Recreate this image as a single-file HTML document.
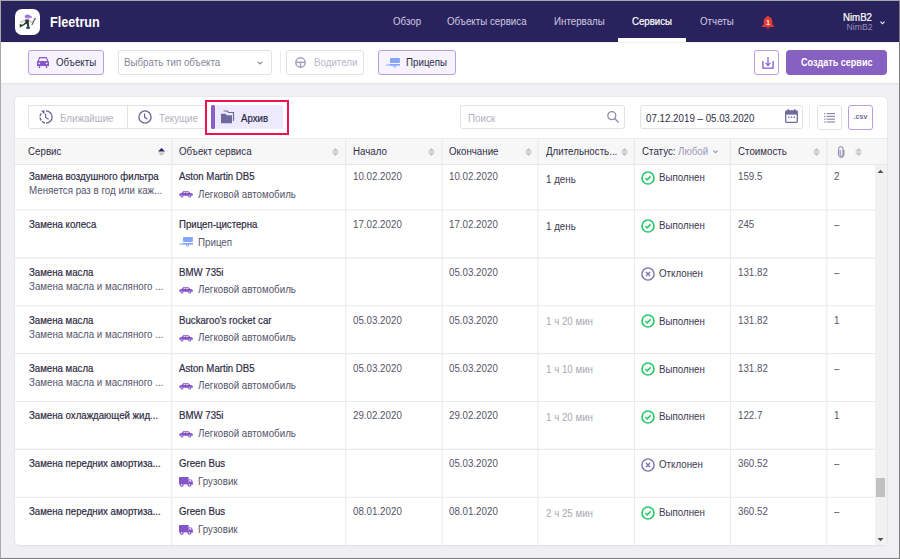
<!DOCTYPE html>
<html><head><meta charset="utf-8">
<style>
*{box-sizing:border-box;margin:0;padding:0}
html,body{width:900px;height:559px;overflow:hidden}
body{position:relative;background:#efeff4;font-family:"Liberation Sans",sans-serif;color:#2f2d45}
.a{position:absolute}
.t{position:absolute;white-space:nowrap;font-size:10px;line-height:12px;transform:scaleX(.975);transform-origin:0 0}
.tb{position:absolute;white-space:nowrap;font-size:10px;line-height:12px;-webkit-text-stroke:.2px currentColor;transform:scaleX(.965);transform-origin:0 0}
svg{position:absolute;overflow:visible}
#frame{left:0;top:0;width:900px;height:559px;border-left:1px solid #a8a8a8;border-top:1px solid #a8a8a8;border-right:1px solid #7c7c7c;border-bottom:1px solid #7c7c7c;z-index:50}
#hdr{left:0;top:0;width:900px;height:42px;background:#2a225c}
.nav{color:#cfcbe4}
#tool{left:0;top:42px;width:900px;height:41px;background:#fff;box-shadow:0 1px 2px rgba(0,0,0,.06),inset 0 1px 1px rgba(0,0,0,.06)}
.btn{position:absolute;border:1px solid #e2e1e6;border-radius:3px;background:#fff}
.btnp{border-color:#b99de3;background:#f6f3fe}
#panel{left:15px;top:97px;width:872px;height:448px;background:#fff;border-radius:4px;box-shadow:0 0 1.5px rgba(0,0,0,.13),0 1px 3px rgba(0,0,0,.05)}
.vl{position:absolute;width:1px;background:#e6e6e9}
.hl{position:absolute;height:1px;background:#e8e8eb}
.c1{color:#2f2d45}
.c2{color:#4d4b60}
.gr{color:#b3b1bd}
</style></head><body>
<div id="frame" class="a"></div>

<!-- HEADER -->
<div id="hdr" class="a"></div>
<div class="a" style="left:15px;top:9px;width:25px;height:26px;background:#fff;border-radius:7px"></div>
<svg style="left:15px;top:9px" width="25" height="26" viewBox="0 0 25 26">
  <ellipse cx="12.6" cy="7.6" rx="2.8" ry="2" fill="#9d74e8"/>
  <rect x="13.5" y="7.3" width="3.6" height="1.4" rx="0.6" fill="#9d74e8"/>
  <rect x="11" y="8.8" width="3.2" height="2" fill="#f3c6c0"/>
  <path d="M7.6 10.6 L10.4 10.4 L10.4 12.8 L7.6 13.2 Z" fill="#d8d8d8"/>
  <path d="M13.6 10.6 L16 11.2 L15.8 13 L13.6 12.6 Z" fill="#d0d0d0"/>
  <path d="M10.2 10.6 L13.8 10.6 L13.8 14.4 L10.2 14.4 Z" fill="#1f3a33"/>
  <path d="M10.2 13.6 L12.4 14 L8.6 16.6 L6.8 17.6 L5.4 16.2 L7.8 15.4 Z" fill="#1f3a33"/>
  <rect x="4.7" y="15.2" width="1.8" height="3" fill="#1f3a33"/>
  <path d="M11.6 14 L13.8 14 L14.2 17.8 L12.4 17.8 Z" fill="#1f3a33"/>
  <rect x="11.4" y="17.6" width="3.4" height="2.2" fill="#1f3a33"/>
  <rect x="5.3" y="12" width="2.3" height="2.2" fill="#f0c2bd"/>
  <rect x="15.4" y="12" width="2.6" height="2" fill="#f0c2bd"/>
  <path d="M20.4 10.2 L17.6 15.8 L16.9 16.6 L16.3 16.2 L19.3 9.8 Z" fill="#555"/>
  <path d="M18.6 9.6 L19.3 8.6 L19.9 10 L20.6 8.7 L21.2 9.8 L20.4 11 L19 11 Z" fill="#777"/>
</svg>
<div class="a" style="left:50px;top:14px;font-size:14px;line-height:16px;font-weight:bold;color:#fff;white-space:nowrap;transform:scaleX(.9);transform-origin:0 0;">Fleetrun</div>

<div class="t nav" style="left:393px;top:16px">Обзор</div>
<div class="t nav" style="left:447px;top:16px">Объекты сервиса</div>
<div class="t nav" style="left:554px;top:16px">Интервалы</div>
<div class="tb" style="left:632px;top:16px;color:#fff">Сервисы</div>
<div class="a" style="left:618px;top:38px;width:68px;height:4px;background:#fff"></div>
<div class="t nav" style="left:700px;top:16px">Отчеты</div>
<svg style="left:761px;top:15px" width="14" height="14" viewBox="0 0 14 14">
  <path d="M7 0.8 C7.6 0.8 8 1.2 8 1.8 C10.2 2.4 11.3 4.3 11.3 6.6 L11.3 9.6 L13.2 11.3 L13.2 12 L0.8 12 L0.8 11.3 L2.7 9.6 L2.7 6.6 C2.7 4.3 3.8 2.4 6 1.8 C6 1.2 6.4 0.8 7 0.8 Z" fill="#e33a36"/>
  <path d="M5.6 12.4 L8.4 12.4 C8.4 13.2 7.8 13.8 7 13.8 C6.2 13.8 5.6 13.2 5.6 12.4Z" fill="#e33a36"/>
  <text x="7" y="10.2" font-size="6.5" font-weight="bold" fill="#fff" text-anchor="middle" font-family="Liberation Sans">1</text>
</svg>
<div class="tb" style="left:843px;top:12px;color:#fff">NimB2</div>
<div class="a" style="left:846.5px;top:22px;font-size:8.7px;line-height:11px;color:#9591b5;white-space:nowrap">NimB2</div>
<svg style="left:880px;top:20.5px" width="5" height="4" viewBox="0 0 5 4"><path d="M0.5 0.7 L2.5 2.8 L4.5 0.7" stroke="#fff" stroke-width="1.1" fill="none"/></svg>

<!-- TOOLBAR -->
<div id="tool" class="a"></div>
<div class="btn btnp" style="left:28px;top:50px;width:76px;height:25px"></div>
<svg style="left:36.8px;top:56.8px" width="12" height="11" viewBox="0 0 12 11">
  <path d="M2.2 0 L9.8 0 L11.2 4 L12 4.6 L12 9 L10.2 9 L10.2 11 L8.8 11 L8.8 9 L3.2 9 L3.2 11 L1.8 11 L1.8 9 L0 9 L0 4.6 L0.8 4 Z" fill="#8456c8"/>
  <path d="M2.9 1.2 L9.1 1.2 L10 3.9 L2 3.9 Z" fill="#f6f3fe"/>
  <circle cx="2.3" cy="6.3" r="0.9" fill="#f6f3fe"/><circle cx="9.7" cy="6.3" r="0.9" fill="#f6f3fe"/>
</svg>
<div class="t c1" style="left:56px;top:57px">Объекты</div>

<div class="btn" style="left:118px;top:50px;width:154px;height:25px"></div>
<div class="t" style="left:124px;top:57px;color:#87859a">Выбрать тип объекта</div>
<svg style="left:257px;top:61px" width="6" height="4" viewBox="0 0 6 4"><path d="M0.6 0.6 L3 3 L5.4 0.6" stroke="#8a889c" stroke-width="1.1" fill="none"/></svg>
<div class="vl" style="left:280px;top:52px;height:21px;background:#ebebee"></div>

<div class="btn" style="left:286px;top:50px;width:78px;height:25px"></div>
<svg style="left:295px;top:57px" width="11" height="11" viewBox="0 0 11 11">
  <circle cx="5.5" cy="5.5" r="4.7" stroke="#a19dbd" stroke-width="1.4" fill="none"/>
  <path d="M1 5.3 L10 5.3" stroke="#a19dbd" stroke-width="1.4"/>
  <path d="M5.5 5.3 L5.5 10" stroke="#a19dbd" stroke-width="1.4"/>
</svg>
<div class="t" style="left:314px;top:57px;color:#b9b6c8">Водители</div>

<div class="btn btnp" style="left:378px;top:50px;width:78px;height:25px"></div>
<svg style="left:385.8px;top:57.9px" width="14" height="11" viewBox="0 0 14 11">
<rect x="4" y="0" width="9.9" height="5" rx="0.7" fill="#86a5f8"/>
<rect x="3.4" y="6" width="10.5" height="1.7" fill="#86a5f8"/>
<rect x="0" y="6.6" width="3.6" height="0.9" fill="#86a5f8"/>
<circle cx="8.6" cy="7.9" r="1.6" fill="#86a5f8"/><circle cx="8.6" cy="7.9" r="0.6" fill="#f6f3fe"/>
</svg>
<div class="t c1" style="left:406px;top:57px">Прицепы</div>

<div class="btn" style="left:754px;top:50px;width:25px;height:25px;border-color:#b99de3"></div>
<svg style="left:761.5px;top:57px" width="12" height="12" viewBox="0 0 12 12">
  <path d="M0.9 4 L0.9 11.1 L11.1 11.1 L11.1 4" stroke="#8456c8" stroke-width="1.3" fill="none"/>
  <path d="M6 0 L6 8.3" stroke="#8456c8" stroke-width="1.2"/>
  <path d="M3.6 5.9 L6 8.4 L8.4 5.9" stroke="#8456c8" stroke-width="1.2" fill="none"/>
</svg>
<div class="a" style="left:786px;top:50px;width:101px;height:25px;background:#8661c1;border-radius:4px"></div>
<div class="t" style="left:801px;top:57px;color:#fff;font-weight:bold;transform:scaleX(.905)">Создать сервис</div>

<!-- PANEL -->
<div id="panel" class="a"></div>

<!-- segmented -->
<div class="btn" style="left:28px;top:105px;width:178px;height:24px;border-radius:3px 0 0 3px;border-right:none"></div>
<div class="vl" style="left:127px;top:105px;height:24px;background:#e2e1e6"></div>
<svg style="left:39px;top:110px" width="14" height="14" viewBox="0 0 14 14">
  <path d="M7 0.9 A6.1 6.1 0 0 1 7 13.1" stroke="#6a6393" stroke-width="1.3" fill="none"/>
  <path d="M6 13 A6.1 6.1 0 0 1 3.2 11.6" stroke="#6a6393" stroke-width="1.3" fill="none"/>
  <path d="M2.3 10.5 A6.1 6.1 0 0 1 1 7.6" stroke="#6a6393" stroke-width="1.3" fill="none"/>
  <path d="M1 6.3 A6.1 6.1 0 0 1 2.3 3.4" stroke="#6a6393" stroke-width="1.3" fill="none"/>
  <path d="M2 0.6 L5.6 0.6 L5.4 4.4 Z" fill="#6a6393"/>
  <path d="M6.6 3.8 L6.6 7.4 L9.6 9.3" stroke="#6a6393" stroke-width="1.2" fill="none"/>
</svg>
<div class="t" style="left:60px;top:113px;color:#b3b1bd">Ближайшие</div>
<svg style="left:138px;top:110px" width="14" height="14" viewBox="0 0 14 14">
  <circle cx="7" cy="7" r="6.1" stroke="#6a6393" stroke-width="1.3" fill="none"/>
  <path d="M6.6 3.6 L6.6 7.3 L9.4 9" stroke="#6a6393" stroke-width="1.2" fill="none"/>
</svg>
<div class="t" style="left:159px;top:113px;color:#b3b1bd">Текущие</div>

<div class="a" style="left:211px;top:105px;width:72px;height:24px;background:#eeeafd;border-radius:0 3px 3px 0"></div>
<div class="a" style="left:211px;top:105px;width:3.5px;height:24px;background:#8a5fc8;border-radius:1.5px"></div>
<svg style="left:221px;top:111px" width="14" height="12.5" viewBox="0 0 14 12.5">
  <path d="M2.5 0 L6.2 0 L7.5 1.5 L12.5 1.5 L12.5 10" stroke="#6f6a9e" stroke-width="1.2" fill="none"/>
  <path d="M0 2.8 L4.5 2.8 L5.8 4.2 L11 4.2 L11 12.3 L0 12.3 Z" fill="#6f6a9e"/>
</svg>
<div class="tb" style="left:241px;top:113px;color:#2a2745">Архив</div>
<div class="a" style="left:205px;top:100px;width:84px;height:35px;border:2px solid #ee1250;z-index:20"></div>

<!-- search -->
<div class="btn" style="left:460px;top:105px;width:165px;height:24px"></div>
<div class="t" style="left:468px;top:113px;color:#b3b1bd">Поиск</div>
<svg style="left:606px;top:110px" width="14" height="14" viewBox="0 0 14 14">
  <circle cx="5.8" cy="5.6" r="4" stroke="#8f8ab0" stroke-width="1.3" fill="none"/>
  <path d="M8.7 8.6 L12.6 12.4" stroke="#8f8ab0" stroke-width="1.4"/>
</svg>

<!-- date -->
<div class="btn" style="left:640px;top:105px;width:163px;height:24px"></div>
<div class="t c1" style="left:646px;top:113px">07.12.2019 – 05.03.2020</div>
<svg style="left:784.5px;top:108.5px" width="13" height="14" viewBox="0 0 13 14">
  <rect x="0.7" y="2" width="11.6" height="11.3" rx="1" stroke="#6f6a9e" stroke-width="1.3" fill="none"/>
  <rect x="0.7" y="2" width="11.6" height="3.6" fill="#6f6a9e"/>
  <rect x="2.6" y="0" width="1.3" height="3" fill="#6f6a9e"/><rect x="9.1" y="0" width="1.3" height="3" fill="#6f6a9e"/>
  <rect x="3" y="7.5" width="1.4" height="1.4" fill="#6f6a9e"/><rect x="5.8" y="7.5" width="1.4" height="1.4" fill="#6f6a9e"/><rect x="8.6" y="7.5" width="1.4" height="1.4" fill="#6f6a9e"/>
</svg>
<div class="vl" style="left:809px;top:105px;height:24px;background:#ececef"></div>
<div class="btn" style="left:817px;top:105px;width:25px;height:25px"></div>
<svg style="left:823.5px;top:112.5px" width="11" height="10" viewBox="0 0 11 10">
  <rect x="0" y="0" width="1.3" height="1.2" fill="#8f8ab0"/><rect x="2.5" y="0" width="8.5" height="1.2" fill="#8f8ab0"/>
  <rect x="0" y="2.8" width="1.3" height="1.2" fill="#8f8ab0"/><rect x="2.5" y="2.8" width="8.5" height="1.2" fill="#8f8ab0"/>
  <rect x="0" y="5.6" width="1.3" height="1.2" fill="#8f8ab0"/><rect x="2.5" y="5.6" width="8.5" height="1.2" fill="#8f8ab0"/>
  <rect x="0" y="8.4" width="1.3" height="1.2" fill="#8f8ab0"/><rect x="2.5" y="8.4" width="8.5" height="1.2" fill="#8f8ab0"/>
</svg>
<div class="btn" style="left:848px;top:105px;width:25px;height:25px;border-color:#b99de3"></div>
<div class="a" style="left:853.5px;top:112.5px;font-size:7px;line-height:8px;font-weight:bold;color:#6f6a9e;white-space:nowrap;letter-spacing:.1px">.csv</div>

<!-- TABLE -->
<div class="hl" style="left:15px;top:138px;width:872px;background:#ebebee"></div>
<div class="a" style="left:15px;top:139px;width:872px;height:25px;background:#f7f7f8"></div>
<div class="hl" style="left:15px;top:164px;width:872px;background:#e6e6e9"></div>
<div class="a" style="left:15px;top:165px;width:860px;height:380px;overflow:hidden">
<div class="tb" style="left:14px;top:6px;color:#2f2d45">Замена воздушного фильтра</div>
<div class="t" style="left:14px;top:20px;color:#535469">Меняется раз в год или каж...</div>
<div class="tb" style="left:164px;top:6px;color:#2f2d45">Aston Martin DB5</div>
<svg style="left:163.8px;top:26.1px" width="14" height="7" viewBox="0 0 14 7">
<path d="M4.5 0 L9.2 0 L11.4 2.1 L13.2 2.5 L14 3.5 L13.6 4.7 L0.6 4.7 L0.1 3.5 L0.8 2.6 L2.6 2.1 Z" fill="#8456c8"/>
<path d="M4.9 0.8 L6.4 0.8 L6.4 1.8 L4.3 1.8 Z M7.1 0.8 L8.9 0.8 L9.8 1.8 L7.1 1.8 Z" fill="#fff"/>
<circle cx="3" cy="4.9" r="1.55" fill="#8456c8"/><circle cx="10.7" cy="4.9" r="1.55" fill="#8456c8"/>
<circle cx="3" cy="4.9" r="0.65" fill="#fff"/><circle cx="10.7" cy="4.9" r="0.65" fill="#fff"/>
</svg>
<div class="t" style="left:183px;top:24px;color:#535469">Легковой автомобиль</div>
<div class="t" style="left:338px;top:6px;color:#535469">10.02.2020</div>
<div class="t" style="left:434px;top:6px;color:#535469">10.02.2020</div>
<div class="t" style="left:531px;top:9px;color:#3a384f">1 день</div>
<svg style="left:626.3px;top:5.8px" width="14" height="14" viewBox="0 0 14 14">
<circle cx="7" cy="7" r="6" stroke="#2cc86b" stroke-width="1.7" fill="none"/>
<path d="M4.3 7.2 L6.2 8.9 L9.7 5.4" stroke="#2cc86b" stroke-width="1.5" fill="none"/>
</svg>
<div class="t" style="left:644px;top:7px;color:#3a384f">Выполнен</div>
<div class="t" style="left:723px;top:6px;color:#535469">159.5</div>
<div class="t" style="left:819px;top:6px;color:#535469">2</div>
<div class="tb" style="left:14px;top:54px;color:#2f2d45">Замена колеса</div>
<div class="tb" style="left:164px;top:54px;color:#2f2d45">Прицеп-цистерна</div>
<svg style="left:163.9px;top:72.2px" width="14" height="10" viewBox="0 0 14 10">
<rect x="4" y="0" width="9.9" height="5" rx="0.7" fill="#86a5f8"/>
<rect x="3.4" y="6" width="10.5" height="1.7" fill="#86a5f8"/>
<rect x="0" y="6.6" width="3.6" height="0.9" fill="#86a5f8"/>
<circle cx="8.6" cy="7.9" r="1.6" fill="#86a5f8"/><circle cx="8.6" cy="7.9" r="0.6" fill="#fff"/>
</svg>
<div class="t" style="left:183px;top:72px;color:#535469">Прицеп</div>
<div class="t" style="left:338px;top:54px;color:#535469">17.02.2020</div>
<div class="t" style="left:434px;top:54px;color:#535469">17.02.2020</div>
<div class="t" style="left:531px;top:56px;color:#3a384f">1 день</div>
<svg style="left:626.3px;top:53.7px" width="14" height="14" viewBox="0 0 14 14">
<circle cx="7" cy="7" r="6" stroke="#2cc86b" stroke-width="1.7" fill="none"/>
<path d="M4.3 7.2 L6.2 8.9 L9.7 5.4" stroke="#2cc86b" stroke-width="1.5" fill="none"/>
</svg>
<div class="t" style="left:644px;top:55px;color:#3a384f">Выполнен</div>
<div class="t" style="left:723px;top:54px;color:#535469">245</div>
<div class="t" style="left:819px;top:54px;color:#535469">–</div>
<div class="tb" style="left:14px;top:102px;color:#2f2d45">Замена масла</div>
<div class="t" style="left:14px;top:116px;color:#535469">Замена масла и масляного ...</div>
<div class="tb" style="left:164px;top:102px;color:#2f2d45">BMW 735i</div>
<svg style="left:163.8px;top:121.9px" width="14" height="7" viewBox="0 0 14 7">
<path d="M4.5 0 L9.2 0 L11.4 2.1 L13.2 2.5 L14 3.5 L13.6 4.7 L0.6 4.7 L0.1 3.5 L0.8 2.6 L2.6 2.1 Z" fill="#8456c8"/>
<path d="M4.9 0.8 L6.4 0.8 L6.4 1.8 L4.3 1.8 Z M7.1 0.8 L8.9 0.8 L9.8 1.8 L7.1 1.8 Z" fill="#fff"/>
<circle cx="3" cy="4.9" r="1.55" fill="#8456c8"/><circle cx="10.7" cy="4.9" r="1.55" fill="#8456c8"/>
<circle cx="3" cy="4.9" r="0.65" fill="#fff"/><circle cx="10.7" cy="4.9" r="0.65" fill="#fff"/>
</svg>
<div class="t" style="left:183px;top:119px;color:#535469">Легковой автомобиль</div>
<div class="t" style="left:434px;top:102px;color:#535469">05.03.2020</div>
<svg style="left:626.3px;top:101.6px" width="14" height="14" viewBox="0 0 14 14">
<circle cx="7" cy="7" r="6.1" stroke="#7b70a8" stroke-width="1.4" fill="none"/>
<path d="M5 5 L9 9 M9 5 L5 9" stroke="#7b70a8" stroke-width="1.3" fill="none"/>
</svg>
<div class="t" style="left:644px;top:103px;color:#3a384f">Отклонен</div>
<div class="t" style="left:723px;top:102px;color:#535469">131.82</div>
<div class="t" style="left:819px;top:102px;color:#535469">–</div>
<div class="tb" style="left:14px;top:150px;color:#2f2d45">Замена масла</div>
<div class="t" style="left:14px;top:164px;color:#535469">Замена масла и масляного ...</div>
<div class="tb" style="left:164px;top:150px;color:#2f2d45">Buckaroo's rocket car</div>
<svg style="left:163.8px;top:169.7px" width="14" height="7" viewBox="0 0 14 7">
<path d="M4.5 0 L9.2 0 L11.4 2.1 L13.2 2.5 L14 3.5 L13.6 4.7 L0.6 4.7 L0.1 3.5 L0.8 2.6 L2.6 2.1 Z" fill="#8456c8"/>
<path d="M4.9 0.8 L6.4 0.8 L6.4 1.8 L4.3 1.8 Z M7.1 0.8 L8.9 0.8 L9.8 1.8 L7.1 1.8 Z" fill="#fff"/>
<circle cx="3" cy="4.9" r="1.55" fill="#8456c8"/><circle cx="10.7" cy="4.9" r="1.55" fill="#8456c8"/>
<circle cx="3" cy="4.9" r="0.65" fill="#fff"/><circle cx="10.7" cy="4.9" r="0.65" fill="#fff"/>
</svg>
<div class="t" style="left:183px;top:167px;color:#535469">Легковой автомобиль</div>
<div class="t" style="left:338px;top:150px;color:#535469">05.03.2020</div>
<div class="t" style="left:434px;top:150px;color:#535469">05.03.2020</div>
<div class="t" style="left:531px;top:151px;color:#a9a9b0">1 ч 20 мин</div>
<svg style="left:626.3px;top:149.4px" width="14" height="14" viewBox="0 0 14 14">
<circle cx="7" cy="7" r="6" stroke="#2cc86b" stroke-width="1.7" fill="none"/>
<path d="M4.3 7.2 L6.2 8.9 L9.7 5.4" stroke="#2cc86b" stroke-width="1.5" fill="none"/>
</svg>
<div class="t" style="left:644px;top:151px;color:#3a384f">Выполнен</div>
<div class="t" style="left:723px;top:150px;color:#535469">131.82</div>
<div class="t" style="left:819px;top:150px;color:#535469">1</div>
<div class="tb" style="left:14px;top:198px;color:#2f2d45">Замена масла</div>
<div class="t" style="left:14px;top:212px;color:#535469">Замена масла и масляного ...</div>
<div class="tb" style="left:164px;top:198px;color:#2f2d45">Aston Martin DB5</div>
<svg style="left:163.8px;top:217.6px" width="14" height="7" viewBox="0 0 14 7">
<path d="M4.5 0 L9.2 0 L11.4 2.1 L13.2 2.5 L14 3.5 L13.6 4.7 L0.6 4.7 L0.1 3.5 L0.8 2.6 L2.6 2.1 Z" fill="#8456c8"/>
<path d="M4.9 0.8 L6.4 0.8 L6.4 1.8 L4.3 1.8 Z M7.1 0.8 L8.9 0.8 L9.8 1.8 L7.1 1.8 Z" fill="#fff"/>
<circle cx="3" cy="4.9" r="1.55" fill="#8456c8"/><circle cx="10.7" cy="4.9" r="1.55" fill="#8456c8"/>
<circle cx="3" cy="4.9" r="0.65" fill="#fff"/><circle cx="10.7" cy="4.9" r="0.65" fill="#fff"/>
</svg>
<div class="t" style="left:183px;top:215px;color:#535469">Легковой автомобиль</div>
<div class="t" style="left:338px;top:198px;color:#535469">05.03.2020</div>
<div class="t" style="left:434px;top:198px;color:#535469">05.03.2020</div>
<div class="t" style="left:531px;top:199px;color:#a9a9b0">1 ч 10 мин</div>
<svg style="left:626.3px;top:197.3px" width="14" height="14" viewBox="0 0 14 14">
<circle cx="7" cy="7" r="6" stroke="#2cc86b" stroke-width="1.7" fill="none"/>
<path d="M4.3 7.2 L6.2 8.9 L9.7 5.4" stroke="#2cc86b" stroke-width="1.5" fill="none"/>
</svg>
<div class="t" style="left:644px;top:199px;color:#3a384f">Выполнен</div>
<div class="t" style="left:723px;top:198px;color:#535469">131.82</div>
<div class="t" style="left:819px;top:198px;color:#535469">–</div>
<div class="tb" style="left:14px;top:245px;color:#2f2d45">Замена охлаждающей жид...</div>
<div class="tb" style="left:164px;top:245px;color:#2f2d45">BMW 735i</div>
<svg style="left:163.8px;top:265.5px" width="14" height="7" viewBox="0 0 14 7">
<path d="M4.5 0 L9.2 0 L11.4 2.1 L13.2 2.5 L14 3.5 L13.6 4.7 L0.6 4.7 L0.1 3.5 L0.8 2.6 L2.6 2.1 Z" fill="#8456c8"/>
<path d="M4.9 0.8 L6.4 0.8 L6.4 1.8 L4.3 1.8 Z M7.1 0.8 L8.9 0.8 L9.8 1.8 L7.1 1.8 Z" fill="#fff"/>
<circle cx="3" cy="4.9" r="1.55" fill="#8456c8"/><circle cx="10.7" cy="4.9" r="1.55" fill="#8456c8"/>
<circle cx="3" cy="4.9" r="0.65" fill="#fff"/><circle cx="10.7" cy="4.9" r="0.65" fill="#fff"/>
</svg>
<div class="t" style="left:183px;top:263px;color:#535469">Легковой автомобиль</div>
<div class="t" style="left:338px;top:245px;color:#535469">29.02.2020</div>
<div class="t" style="left:434px;top:245px;color:#535469">29.02.2020</div>
<div class="t" style="left:531px;top:247px;color:#a9a9b0">1 ч 20 мин</div>
<svg style="left:626.3px;top:245.2px" width="14" height="14" viewBox="0 0 14 14">
<circle cx="7" cy="7" r="6" stroke="#2cc86b" stroke-width="1.7" fill="none"/>
<path d="M4.3 7.2 L6.2 8.9 L9.7 5.4" stroke="#2cc86b" stroke-width="1.5" fill="none"/>
</svg>
<div class="t" style="left:644px;top:246px;color:#3a384f">Выполнен</div>
<div class="t" style="left:723px;top:245px;color:#535469">122.7</div>
<div class="t" style="left:819px;top:245px;color:#535469">1</div>
<div class="tb" style="left:14px;top:293px;color:#2f2d45">Замена передних амортиза...</div>
<div class="tb" style="left:164px;top:293px;color:#2f2d45">Green Bus</div>
<svg style="left:163.9px;top:311.7px" width="14" height="10" viewBox="0 0 14 10">
<rect x="0" y="0" width="9.6" height="7" rx="0.5" fill="#8456c8"/>
<path d="M9.6 2.4 L12.3 2.4 L13.8 4.6 L13.8 7.4 L9.6 7.4 Z" fill="#8456c8"/>
<rect x="0" y="6.2" width="13.8" height="1.2" fill="#8456c8"/>
<path d="M10.4 3.2 L11.9 3.2 L12.8 4.6 L10.4 4.6 Z" fill="#fff"/>
<circle cx="2.8" cy="7.8" r="1.9" fill="#8456c8"/><circle cx="10.4" cy="7.8" r="1.9" fill="#8456c8"/>
<circle cx="2.8" cy="7.8" r="0.8" fill="#fff"/><circle cx="10.4" cy="7.8" r="0.8" fill="#fff"/>
</svg>
<div class="t" style="left:183px;top:311px;color:#535469">Грузовик</div>
<div class="t" style="left:434px;top:293px;color:#535469">05.03.2020</div>
<svg style="left:626.3px;top:293.1px" width="14" height="14" viewBox="0 0 14 14">
<circle cx="7" cy="7" r="6.1" stroke="#7b70a8" stroke-width="1.4" fill="none"/>
<path d="M5 5 L9 9 M9 5 L5 9" stroke="#7b70a8" stroke-width="1.3" fill="none"/>
</svg>
<div class="t" style="left:644px;top:294px;color:#3a384f">Отклонен</div>
<div class="t" style="left:723px;top:293px;color:#535469">360.52</div>
<div class="t" style="left:819px;top:293px;color:#535469">–</div>
<div class="tb" style="left:14px;top:341px;color:#2f2d45">Замена передних амортиза...</div>
<div class="tb" style="left:164px;top:341px;color:#2f2d45">Green Bus</div>
<svg style="left:163.9px;top:359.5px" width="14" height="10" viewBox="0 0 14 10">
<rect x="0" y="0" width="9.6" height="7" rx="0.5" fill="#8456c8"/>
<path d="M9.6 2.4 L12.3 2.4 L13.8 4.6 L13.8 7.4 L9.6 7.4 Z" fill="#8456c8"/>
<rect x="0" y="6.2" width="13.8" height="1.2" fill="#8456c8"/>
<path d="M10.4 3.2 L11.9 3.2 L12.8 4.6 L10.4 4.6 Z" fill="#fff"/>
<circle cx="2.8" cy="7.8" r="1.9" fill="#8456c8"/><circle cx="10.4" cy="7.8" r="1.9" fill="#8456c8"/>
<circle cx="2.8" cy="7.8" r="0.8" fill="#fff"/><circle cx="10.4" cy="7.8" r="0.8" fill="#fff"/>
</svg>
<div class="t" style="left:183px;top:359px;color:#535469">Грузовик</div>
<div class="t" style="left:338px;top:341px;color:#535469">08.01.2020</div>
<div class="t" style="left:434px;top:341px;color:#535469">08.01.2020</div>
<div class="t" style="left:531px;top:343px;color:#a9a9b0">2 ч 25 мин</div>
<svg style="left:626.3px;top:340.9px" width="14" height="14" viewBox="0 0 14 14">
<circle cx="7" cy="7" r="6" stroke="#2cc86b" stroke-width="1.7" fill="none"/>
<path d="M4.3 7.2 L6.2 8.9 L9.7 5.4" stroke="#2cc86b" stroke-width="1.5" fill="none"/>
</svg>
<div class="t" style="left:644px;top:342px;color:#3a384f">Выполнен</div>
<div class="t" style="left:723px;top:341px;color:#535469">360.52</div>
<div class="t" style="left:819px;top:341px;color:#535469">–</div>
</div>
<svg style="left:0;top:0" width="900" height="559" viewBox="0 0 900 559">
<line x1="171.8" y1="139" x2="171.8" y2="545" stroke="#eaeaed" stroke-width="1.15"/>
<line x1="345.7" y1="139" x2="345.7" y2="545" stroke="#eaeaed" stroke-width="1.15"/>
<line x1="442.1" y1="139" x2="442.1" y2="545" stroke="#eaeaed" stroke-width="1.15"/>
<line x1="537.9" y1="139" x2="537.9" y2="545" stroke="#eaeaed" stroke-width="1.15"/>
<line x1="634.4" y1="139" x2="634.4" y2="545" stroke="#eaeaed" stroke-width="1.15"/>
<line x1="730.4" y1="139" x2="730.4" y2="545" stroke="#eaeaed" stroke-width="1.15"/>
<line x1="826.8" y1="139" x2="826.8" y2="545" stroke="#eaeaed" stroke-width="1.15"/>
<line x1="15" y1="210.00" x2="875" y2="210.00" stroke="#eaeaed" stroke-width="1.15"/>
<line x1="15" y1="257.88" x2="875" y2="257.88" stroke="#eaeaed" stroke-width="1.15"/>
<line x1="15" y1="305.75" x2="875" y2="305.75" stroke="#eaeaed" stroke-width="1.15"/>
<line x1="15" y1="353.62" x2="875" y2="353.62" stroke="#eaeaed" stroke-width="1.15"/>
<line x1="15" y1="401.50" x2="875" y2="401.50" stroke="#eaeaed" stroke-width="1.15"/>
<line x1="15" y1="449.38" x2="875" y2="449.38" stroke="#eaeaed" stroke-width="1.15"/>
<line x1="15" y1="497.25" x2="875" y2="497.25" stroke="#eaeaed" stroke-width="1.15"/>
</svg>
<div class="t" style="left:28px;top:146px;color:#2f2d45">Сервис</div>
<div class="t" style="left:179px;top:146px;color:#2f2d45">Объект сервиса</div>
<div class="t" style="left:353px;top:146px;color:#2f2d45">Начало</div>
<div class="t" style="left:449px;top:146px;color:#2f2d45">Окончание</div>
<div class="t" style="left:546px;top:146px;color:#2f2d45">Длительность...</div>
<div class="t" style="left:642px;top:146px;color:#2f2d45">Статус:</div>
<div class="t" style="left:678px;top:146px;color:#9c98bd">Любой</div>
<svg style="left:713px;top:150px" width="5" height="4" viewBox="0 0 5 4"><path d="M0.5 0.6 L2.5 2.8 L4.5 0.6" stroke="#8f8ab0" stroke-width="1.1" fill="none"/></svg>
<div class="t" style="left:738px;top:146px;color:#2f2d45">Стоимость</div>
<svg style="left:838px;top:145.5px" width="7" height="12.5" viewBox="0 0 7 12.5"><path d="M5.9 4 L5.9 9.2 A2.7 2.7 0 0 1 0.6 9.2 L0.6 2.8 A2.2 2.2 0 0 1 5 2.8 L5 8.8 A1.4 1.4 0 0 1 2.2 8.8 L2.2 4.2" stroke="#7b76a8" stroke-width="0.95" fill="none"/></svg>
<svg style="left:157.8px;top:147.5px" width="7" height="8" viewBox="0 0 7 8"><path d="M0 3.4 L3.5 0 L7 3.4 Z" fill="#2a225c"/><path d="M0 4.6 L3.5 8 L7 4.6 Z" fill="#c4c4c8"/></svg>
<svg style="left:331.8px;top:147.5px" width="7" height="8" viewBox="0 0 7 8"><path d="M0 3.4 L3.5 0 L7 3.4 Z" fill="#c4c4c8"/><path d="M0 4.6 L3.5 8 L7 4.6 Z" fill="#c4c4c8"/></svg>
<svg style="left:428.2px;top:147.5px" width="7" height="8" viewBox="0 0 7 8"><path d="M0 3.4 L3.5 0 L7 3.4 Z" fill="#c4c4c8"/><path d="M0 4.6 L3.5 8 L7 4.6 Z" fill="#c4c4c8"/></svg>
<svg style="left:524.5px;top:147.5px" width="7" height="8" viewBox="0 0 7 8"><path d="M0 3.4 L3.5 0 L7 3.4 Z" fill="#c4c4c8"/><path d="M0 4.6 L3.5 8 L7 4.6 Z" fill="#c4c4c8"/></svg>
<svg style="left:621px;top:147.5px" width="7" height="8" viewBox="0 0 7 8"><path d="M0 3.4 L3.5 0 L7 3.4 Z" fill="#c4c4c8"/><path d="M0 4.6 L3.5 8 L7 4.6 Z" fill="#c4c4c8"/></svg>
<svg style="left:812.5px;top:147.5px" width="7" height="8" viewBox="0 0 7 8"><path d="M0 3.4 L3.5 0 L7 3.4 Z" fill="#c4c4c8"/><path d="M0 4.6 L3.5 8 L7 4.6 Z" fill="#c4c4c8"/></svg>
<svg style="left:854.5px;top:147.5px" width="7" height="8" viewBox="0 0 7 8"><path d="M0 3.4 L3.5 0 L7 3.4 Z" fill="#c4c4c8"/><path d="M0 4.6 L3.5 8 L7 4.6 Z" fill="#c4c4c8"/></svg>
<div class="a" style="left:875px;top:165px;width:12px;height:380px;background:#f1f1f1"></div>
<div class="a" style="left:876px;top:478px;width:9px;height:19px;background:#c1c1c1"></div>
<svg style="left:877px;top:169px" width="7" height="5" viewBox="0 0 7 5"><path d="M0.5 4 L3.5 0.8 L6.5 4 Z" fill="#505050"/></svg>
<svg style="left:877px;top:537px" width="7" height="5" viewBox="0 0 7 5"><path d="M0.5 1 L3.5 4.2 L6.5 1 Z" fill="#505050"/></svg>
</body></html>
